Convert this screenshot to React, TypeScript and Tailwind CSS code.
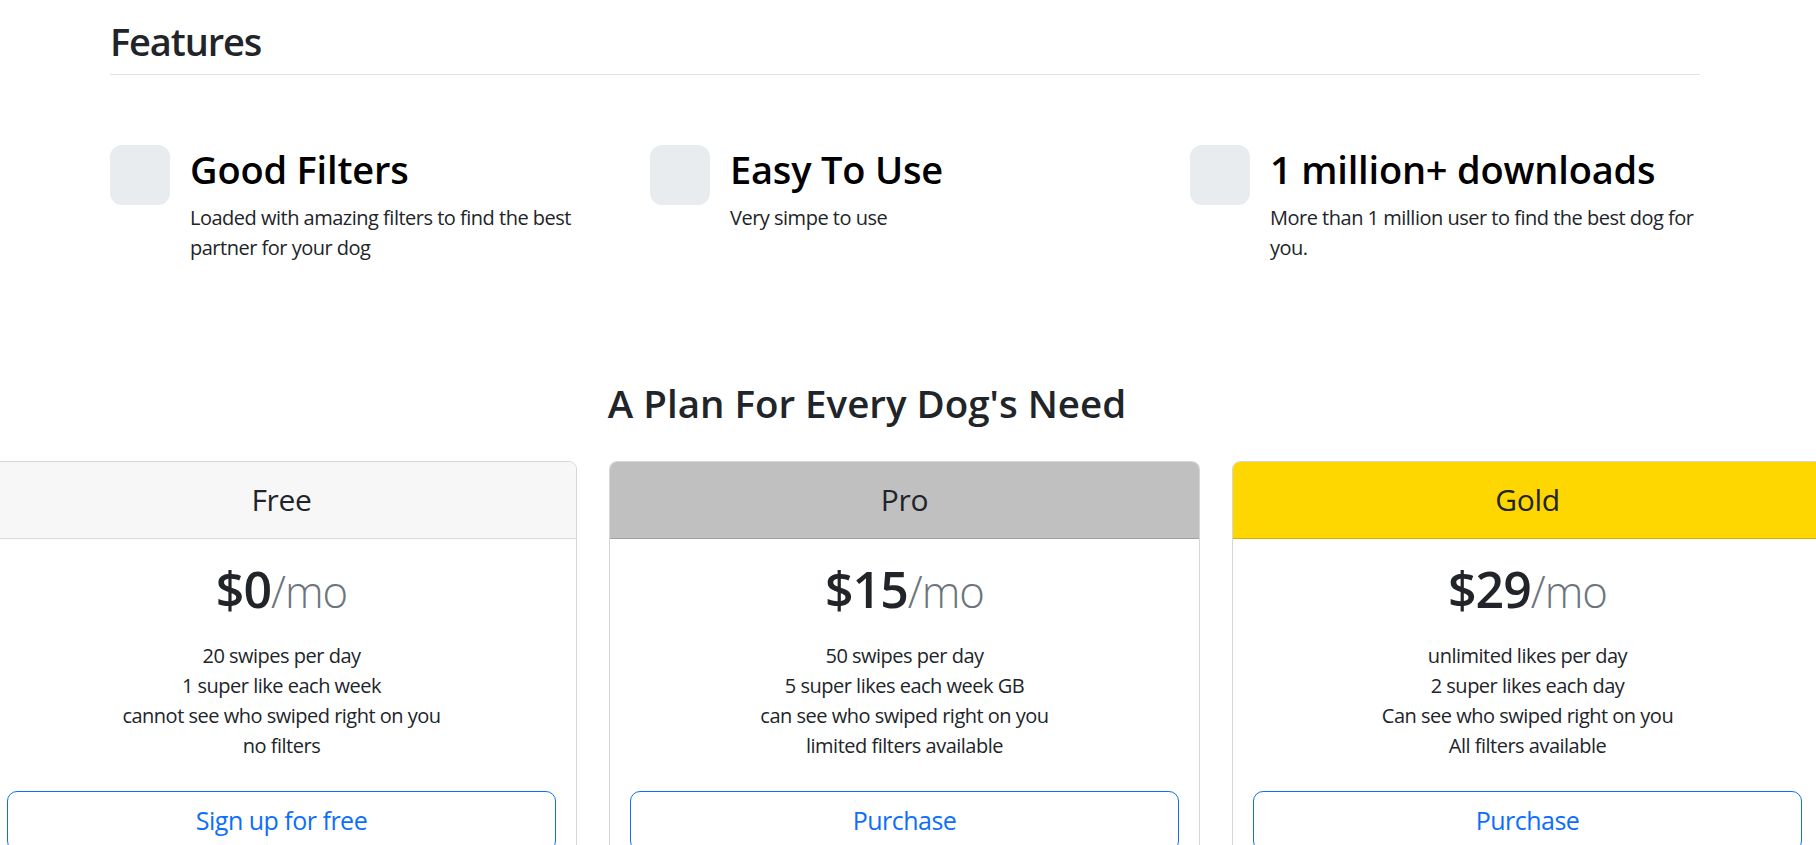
const features = [
  {
    title: "Good Filters",
    text: "Loaded with amazing filters to find the best partner for your dog",
  },
  { title: "Easy To Use", text: "Very simpe to use" },
  {
    title: "1 million+ downloads",
    text: "More than 1 million user to find the best dog for you.",
  },
];

const plans = [
  {
    name: "Free",
    price: "$0",
    head: "bg-[#f7f7f7] border-[#d9d9d9]",
    items: [
      "20 swipes per day",
      "1 super like each week",
      "cannot see who swiped right on you",
      "no filters",
    ],
    cta: "Sign up for free",
  },
  {
    name: "Pro",
    price: "$15",
    head: "bg-[#c0c0c0] border-[#a0a0a0]",
    items: [
      "50 swipes per day",
      "5 super likes each week GB",
      "can see who swiped right on you",
      "limited filters available",
    ],
    cta: "Purchase",
  },
  {
    name: "Gold",
    price: "$29",
    head: "bg-[#ffd700] border-[#d2b200]",
    items: [
      "unlimited likes per day",
      "2 super likes each day",
      "Can see who swiped right on you",
      "All filters available",
    ],
    cta: "Purchase",
  },
];

function Feature({ title, text }: { title: string; text: string }) {
  return (
    <div className="flex items-start">
      <div className="w-[60px] h-[60px] shrink-0 rounded-[12px] bg-[#e9ecef] mr-[20px]" />
      <div>
        <h3 className="pt-[1px] text-[38px] leading-[47px] font-semibold tracking-[-0.005em] text-black mb-[10px]">
          {title}
        </h3>
        <p className="text-[20px] leading-[30px] tracking-[-0.025em] text-[#212529]">
          {text}
        </p>
      </div>
    </div>
  );
}

function PlanCard({ plan }: { plan: (typeof plans)[number] }) {
  return (
    <div className="w-[591px] shrink-0 border border-[#d6d6d6] rounded-[8px] overflow-hidden bg-white">
      <div
        className={`${plan.head} border-b py-[20px] text-center text-[30px] leading-[36px] tracking-[-0.01em] text-[#212529]`}
      >
        {plan.name}
      </div>
      <div className="p-[20px] text-center text-[#212529]">
        <h1 className="text-[50px] leading-[60px] font-semibold tracking-[-0.02em]">
          {plan.price}
          <small className="text-[0.875em] font-light text-[#6c757d]">/mo</small>
        </h1>
        <ul className="mt-[20px] mb-[30px] text-[20px] leading-[30px] tracking-[-0.025em]">
          {plan.items.map((item) => (
            <li key={item}>{item}</li>
          ))}
        </ul>
        <button className="w-full border border-[#0d6efd] text-[#0d6efd] rounded-[10px] py-[10px] text-[25px] leading-[37.5px] tracking-[-0.02em]">
          {plan.cta}
        </button>
      </div>
    </div>
  );
}

export default function App() {
  return (
    <div className="w-full min-h-screen overflow-hidden bg-white font-['Open_Sans',sans-serif] text-[#212529]">
      <section className="pl-[110px] pr-[116px] pt-[17px]">
        <h2 className="text-[38px] leading-[48px] font-semibold tracking-[-0.03em] pb-[9px] border-b border-[#dee2e6]">
          Features
        </h2>
        <div className="grid grid-cols-3 gap-[30px] pt-[70px]">
          {features.map((f) => (
            <Feature key={f.title} title={f.title} text={f.text} />
          ))}
        </div>
      </section>

      <section className="mt-[117px]">
        <h2 className="text-center pr-[82px] text-[38.5px] leading-[46px] font-semibold mb-[35px]">
          A Plan For Every Dog's Need
        </h2>
        <div className="flex gap-[32px] ml-[-14px]">
          {plans.map((p) => (
            <PlanCard key={p.name} plan={p} />
          ))}
        </div>
      </section>
    </div>
  );
}
